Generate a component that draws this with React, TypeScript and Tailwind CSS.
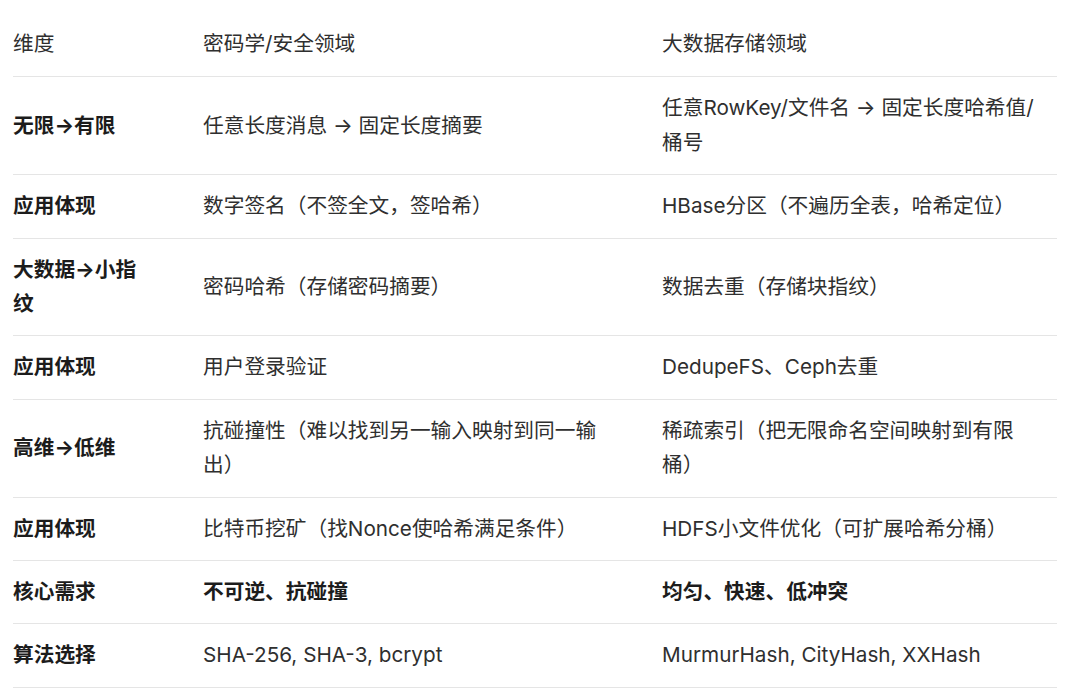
import React from "react";

type Row = { a: string; b: string; c: string; boldAll?: boolean };

const rows: Row[] = [
  { a: "无限→有限", b: "任意长度消息 → 固定长度摘要", c: "任意RowKey/文件名 → 固定长度哈希值/桶号" },
  { a: "应用体现", b: "数字签名（不签全文，签哈希）", c: "HBase分区（不遍历全表，哈希定位）" },
  { a: "大数据→小指纹", b: "密码哈希（存储密码摘要）", c: "数据去重（存储块指纹）" },
  { a: "应用体现", b: "用户登录验证", c: "DedupeFS、Ceph去重" },
  { a: "高维→低维", b: "抗碰撞性（难以找到另一输入映射到同一输出）", c: "稀疏索引（把无限命名空间映射到有限桶）" },
  { a: "应用体现", b: "比特币挖矿（找Nonce使哈希满足条件）", c: "HDFS小文件优化（可扩展哈希分桶）" },
  { a: "核心需求", b: "不可逆、抗碰撞", c: "均匀、快速、低冲突", boldAll: true },
  { a: "算法选择", b: "SHA-256, SHA-3, bcrypt", c: "MurmurHash, CityHash, XXHash" },
];

export default function App() {
  return (
    <div
      className="w-[1080px] h-[690px] bg-white overflow-hidden pt-[12px] pl-[13px]"
      style={{ fontFamily: 'Inter, "Noto Sans CJK SC", "Noto Sans", sans-serif' }}
    >
      <table className="table-fixed border-collapse w-[1044px] text-[20.7px] leading-[34.4px] text-[#2f2f2f]">
        <colgroup>
          <col className="w-[190px]" />
          <col className="w-[459px]" />
          <col className="w-[395px]" />
        </colgroup>
        <thead>
          <tr className="border-b border-[#e5e5e5]">
            <th className="text-left font-normal py-[15px] pr-[50px] align-middle">维度</th>
            <th className="text-left font-normal py-[15px] pr-[55px] align-middle">密码学/安全领域</th>
            <th className="text-left font-normal py-[15px] pr-[19px] align-middle">大数据存储领域</th>
          </tr>
        </thead>
        <tbody>
          {rows.map((r, i) => (
            <tr key={i} className="border-b border-[#e5e5e5]">
              <td className="py-[14px] pr-[50px] align-middle font-bold text-[#1c1c1c]">{r.a}</td>
              <td
                className={
                  r.boldAll
                    ? "py-[14px] pr-[55px] align-middle font-bold text-[#1c1c1c]"
                    : "py-[14px] pr-[55px] align-middle"
                }
              >
                {r.b}
              </td>
              <td
                className={
                  r.boldAll
                    ? "py-[14px] pr-[19px] align-middle font-bold text-[#1c1c1c]"
                    : "py-[14px] pr-[19px] align-middle"
                }
              >
                {r.c}
              </td>
            </tr>
          ))}
        </tbody>
      </table>
    </div>
  );
}
